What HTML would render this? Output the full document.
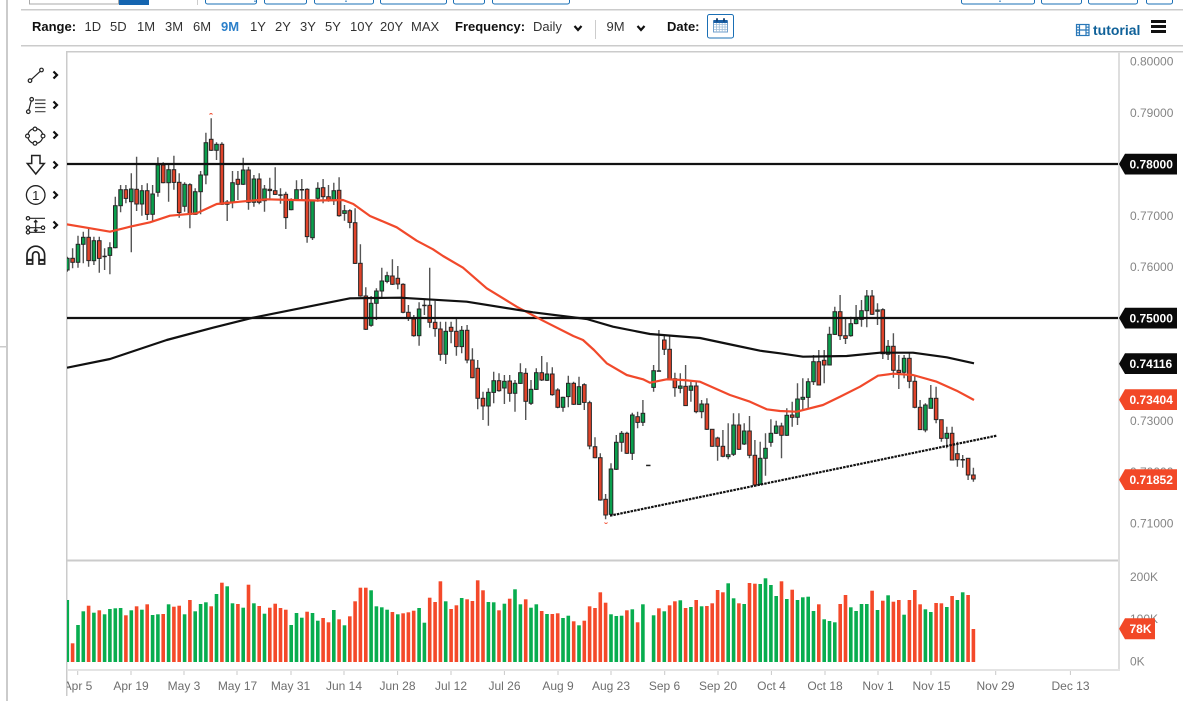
<!DOCTYPE html>
<html lang="en">
<head>
<meta charset="utf-8">
<title>Chart</title>
<style>
html,body{margin:0;padding:0;background:#fff;width:1183px;height:701px;overflow:hidden}
body{position:relative;font-family:"Liberation Sans",sans-serif;filter:blur(.3px)}
svg{position:absolute;left:0;top:0;display:block}
.t{position:absolute;top:18px;font-size:13px;line-height:18px;color:#333;white-space:nowrap;transform-origin:0 50%}
.b{font-weight:bold;color:#111}
</style>
</head>
<body>
<svg width="1183" height="701" viewBox="0 0 1183 701" xmlns="http://www.w3.org/2000/svg">
<defs><clipPath id="c1"><rect x="67" y="52" width="1051" height="507"/></clipPath>
<clipPath id="c2"><rect x="67" y="561" width="1051" height="108"/></clipPath>
<clipPath id="c3"><rect x="67" y="672" width="1116" height="29"/></clipPath></defs>

<!-- frame -->
<g fill="#cbcbcb">
<rect x="6" y="0" width="2" height="701"/>
<rect x="0" y="346" width="7" height="1.5"/>
<rect x="21" y="9" width="1162" height="1.5"/>
<rect x="21" y="45" width="1162" height="1.5"/>
<rect x="66" y="51" width="1117" height="1.5"/>
<rect x="66" y="51" width="1.5" height="645"/>
<rect x="67" y="559.5" width="1051" height="2"/>
</g>
<rect x="1118" y="52" width="2" height="618" fill="#dedede"/>
<rect x="67" y="669" width="1053" height="2" fill="#e4e4e4"/>
<g stroke="#c8c8c8" stroke-width="1">
<path d="M77.7 671V675M131 671V675M184 671V675M237 671V675M291 671V675M344 671V675M397.6 671V675M451 671V675M504.4 671V675M558 671V675M611 671V675M664.7 671V675M718 671V675M771.4 671V675M825 671V675M878 671V675M931 671V675M995.7 671V675M1070.4 671V675"/>
</g>

<!-- top clipped controls -->
<rect x="29.5" y="-2" width="89" height="6" fill="#fff" stroke="#aaa" stroke-width="1"/>
<rect x="119" y="0" width="30" height="5" fill="#1565b0"/>
<rect x="197" y="0" width="1" height="5" fill="#ccc"/>
<g fill="#fff" stroke="#1a6fb5" stroke-width="1">
<rect x="205.5" y="-6" width="51" height="10" rx="2"/>
<rect x="264.5" y="-6" width="42" height="10" rx="2"/>
<rect x="314.5" y="-6" width="59" height="10" rx="2"/>
<rect x="380.5" y="-6" width="66" height="10" rx="2"/>
<rect x="453.5" y="-6" width="31" height="10" rx="2"/>
<rect x="492.5" y="-6" width="77" height="10" rx="2"/>
<rect x="961.5" y="-6" width="73" height="10" rx="2"/>
<rect x="1041.5" y="-6" width="40" height="10" rx="2"/>
<rect x="1088.5" y="-6" width="49" height="10" rx="2"/>
<rect x="1146.5" y="-6" width="26" height="10" rx="2"/>
</g>
<path d="M255 0.5V2M346 0.5V2M1000 0.5V2" stroke="#1a6fb5" stroke-width="1.2"/>

<!-- toolbar icons -->
<rect x="595" y="20" width="1" height="19" fill="#ccc"/>
<path d="M574.5 26L578 30L581.5 26M637.5 26L641 30L644.5 26" fill="none" stroke="#111" stroke-width="2.2"/>
<rect x="707.5" y="14.5" width="26" height="23.5" rx="2" fill="#fff" stroke="#1a6fb5"/>
<g>
<rect x="713.5" y="21" width="14" height="11" fill="#fff" stroke="#6f9fcc" stroke-width="1"/>
<path d="M716.5 22V32M719.3 22V32M722.2 22V32M725 22V32M714 24.5H727M714 27H727M714 29.5H727" stroke="#9dbcd9" stroke-width=".8"/>
<rect x="713.5" y="20" width="14" height="3" fill="#1a5fa5"/>
<path d="M717 18.3V21.5M724 18.3V21.5" stroke="#123f70" stroke-width="1.8"/>
</g>
<g fill="none" stroke="#2a78b8" stroke-width="1.2">
<rect x="1076.5" y="24.5" width="12.5" height="11"/>
<path d="M1079.5 24.5V35.5M1086 24.5V35.5M1079.5 30H1086M1076.5 27.2H1079.5M1076.5 30H1079.5M1076.5 32.8H1079.5M1086 27.2H1089M1086 30H1089M1086 32.8H1089"/>
</g>
<rect x="1151" y="20" width="15" height="3" fill="#111"/>
<rect x="1151" y="25" width="15" height="3" fill="#111"/>
<rect x="1151" y="30" width="15" height="3" fill="#111"/>

<!-- drawing tools -->
<g fill="none" stroke="#222" stroke-width="1.2">
<circle cx="30" cy="80.7" r="1.8"/><circle cx="41.5" cy="70" r="1.8"/><path d="M31.4 79.4L40.2 71.3"/>
<circle cx="28.3" cy="111.7" r="1.8"/><circle cx="31.7" cy="99.3" r="1.8"/><path d="M28.8 110L31.2 101"/>
<path d="M35 100H45.5M35 103.5H45.5M35 107.5H45.5M35 111.7H45.5" stroke="#444" stroke-width="1.2"/>
<circle cx="35.3" cy="136" r="7.5"/>
<g fill="#fff"><circle cx="35" cy="129" r="1.9"/><circle cx="27.5" cy="136" r="1.9"/><circle cx="43" cy="136" r="1.9"/><circle cx="35" cy="143.3" r="1.9"/></g>
<path d="M31.7 155.5H40V163.5H44.3L35.8 174L27.3 163.5H31.7Z" stroke-width="1.5"/>
<circle cx="35.7" cy="195" r="9.3" stroke-width="1.3"/>
<path d="M29.5 218.3H45M29.5 227.7H41.3M29.5 232.3H45"/>
<circle cx="28" cy="218.3" r="1.7"/><circle cx="28" cy="227.7" r="1.7"/><circle cx="28" cy="232.3" r="1.7"/><circle cx="43" cy="227.7" r="1.7"/>
<path d="M35.7 220.5V231.5M34 222.3L35.7 220.3L37.4 222.3M34 229.7L35.7 231.7L37.4 229.7"/>
<path d="M27 264V255A8.8 8.8 0 0 1 44.6 255V264H39V255A3.2 3.2 0 0 0 32.6 255V264Z" stroke-width="1.7"/>
<path d="M27 260H32.6M39 260H44.6" stroke-width="2.2"/>
</g>
<text x="35.7" y="200" font-size="13" text-anchor="middle" fill="#222" font-family="Liberation Sans, sans-serif">1</text>
<g fill="none" stroke="#111" stroke-width="2.2">
<path d="M53.5 71.5L57 75L53.5 78.5M53.5 101.5L57 105L53.5 108.5M53.5 131.5L57 135L53.5 138.5M53.5 161.5L57 165L53.5 168.5M53.5 191.5L57 195L53.5 198.5M53.5 221.5L57 225L53.5 228.5"/>
</g>

<!-- volume -->
<g id="vol" clip-path="url(#c2)"></g>

<!-- candles -->
<g id="cand" clip-path="url(#c1)"></g>

<g clip-path="url(#c1)">
<path d="M67 164H1118M67 318H1118" stroke="#111" stroke-width="2.2" fill="none"/>
<polyline fill="none" stroke="#f1492b" stroke-width="2.2" stroke-linejoin="round" points="66.7,224.3 86.7,227.7 110,231.7 130,226.7 150,222.3 170,215.7 196.7,213.3 216.7,204 240,201.7 266.7,199.3 293,200 316.7,200.5 343,200 353.3,204 370,216 396.7,227.3 416.7,240.7 433,249.3 443,256 463,267.7 486.7,288.3 516.7,306.7 543,320.7 573.3,336 583,340 594,350 606.7,363.3 626.7,375 643,379.3 650,382.7 666.7,379.3 683,380 700,381.7 730,395 750,401.7 766.7,409.3 780,411 796.7,411.7 823,405 840,396.7 860,386.7 878,375.7 893,373.7 913,375 936.7,381.7 956.7,390.7 974,400"/>
<polyline fill="none" stroke="#111" stroke-width="2.2" stroke-linejoin="round" points="67,367.7 110,359 166.7,340 213,327.7 253,317.7 300,308.3 350,298.3 400,297.7 466.7,301.7 533,312.3 586.7,319 613,326.7 650,334 700,338 733,345 760,350.7 780,353.3 803,356.7 846.7,356 880,352.7 913,352.7 946.7,357.3 974,363.3"/>
<path d="M610 515.7L996.5 435.7" stroke="#111" stroke-width="2.2" stroke-dasharray="2.5 1" fill="none"/>
<path d="M209.5 114.5Q211 112.5 212.5 114.5M604.5 522.5Q606 524.5 607.5 522.5" stroke="#f1492b" stroke-width="1" fill="none"/>
</g>

<!-- price axis -->
<g font-family="Liberation Sans, sans-serif" font-size="12" fill="#858585">
<text x="1130" y="65.5">0.80000</text>
<text x="1130" y="117">0.79000</text>
<text x="1130" y="220">0.77000</text>
<text x="1130" y="271">0.76000</text>
<text x="1130" y="425">0.73000</text>
<text x="1130" y="476">0.70000</text>
<text x="1130" y="527.5">0.71000</text>
<text x="1130" y="581">200K</text>
<text x="1130" y="623">100K</text>
<text x="1130" y="665.5">0K</text>
</g>
<g font-family="Liberation Sans, sans-serif" font-size="12" font-weight="bold" fill="#fff">
<path d="M1119 164L1125 153.7H1177V174.5H1125Z" fill="#0a0a0a"/><text x="1129.5" y="168.3">0.78000</text>
<path d="M1119 318L1125 307.7H1177V328.5H1125Z" fill="#0a0a0a"/><text x="1129.5" y="322.3">0.75000</text>
<path d="M1119 363.7L1125 353.3H1177V374H1125Z" fill="#0a0a0a"/><text x="1129.5" y="368">0.74116</text>
<path d="M1119 399.7L1125 389.3H1177V410H1125Z" fill="#f24827"/><text x="1129.5" y="404">0.73404</text>
<path d="M1119 479.7L1125 469.3H1177V490H1125Z" fill="#f24827"/><text x="1129.5" y="484">0.71852</text>
<path d="M1119 628.7L1125 618.3H1155V639.3H1125Z" fill="#f24827"/><text x="1129.5" y="633">78K</text>
</g>

<!-- date axis -->
<g clip-path="url(#c3)" font-family="Liberation Sans, sans-serif" font-size="12" fill="#6e6e6e" text-anchor="middle">
<text x="78" y="690">Apr 5</text><text x="131" y="690">Apr 19</text><text x="184" y="690">May 3</text><text x="237.5" y="690">May 17</text><text x="290.5" y="690">May 31</text><text x="344" y="690">Jun 14</text><text x="397.5" y="690">Jun 28</text><text x="451" y="690">Jul 12</text><text x="504.5" y="690">Jul 26</text><text x="558" y="690">Aug 9</text><text x="611" y="690">Aug 23</text><text x="664.5" y="690">Sep 6</text><text x="718" y="690">Sep 20</text><text x="771.5" y="690">Oct 4</text><text x="825" y="690">Oct 18</text><text x="878" y="690">Nov 1</text><text x="931.5" y="690">Nov 15</text><text x="995.5" y="690">Nov 29</text><text x="1070.5" y="690">Dec 13</text>
</g>
</svg>

<!-- toolbar text -->
<div class="t b" style="left:32px">Range:</div>
<div class="t" style="left:84.5px">1D</div>
<div class="t" style="left:110px">5D</div>
<div class="t" style="left:137px">1M</div>
<div class="t" style="left:165px">3M</div>
<div class="t" style="left:193px">6M</div>
<div class="t b" style="left:221px;color:#2b7fc9">9M</div>
<div class="t" style="left:250px">1Y</div>
<div class="t" style="left:275px">2Y</div>
<div class="t" style="left:300px">3Y</div>
<div class="t" style="left:325px">5Y</div>
<div class="t" style="left:350px">10Y</div>
<div class="t" style="left:380px">20Y</div>
<div class="t" style="left:411px">MAX</div>
<div class="t b" style="left:455px">Frequency:</div>
<div class="t" style="left:533px">Daily</div>
<div class="t" style="left:606.5px">9M</div>
<div class="t b" style="left:667px">Date:</div>
<div class="t" style="left:1093px;top:21px;font-size:14px;font-weight:bold;color:#0f6199">tutorial</div>

<script>
(function(){
var S=[
[105,3,"g460,495,455,500 r460,472,430,490 g418,472,392,488 g397,418,380,475 r397,467,370,485 g407,467,395,480 r407,460,395,503 f452,454,430,495 g428,451,412,508 g302,428,275,430 g254,302,240,322 r254,280,240,295 g252,290,205,442 r253,297,155,318 g257,297,240,332 r257,328,235,345 g267,328,240,350 g180,262,157,275 r180,233,172,235 g194,233,180,290 r194,232,152,254 r232,323,205,338 g238,304,232,320 r239,328,235,370 g260,328,250,330 g210,260,198,328 g113,210,83,238 r103,136,40,138 g118,136,112,165 r118,298,112,300 g291,298,285,348 g233,292,198,310 r223,238,198,285 g195,238,158,240 r195,292,185,314 g222,292,210,305 r222,292,205,298 g252,287,240,320 r253,257,218,282 r257,268,187,270 f268,270,250,296 r268,338,260,372 g284,314,280,316 g254,284,226,285 f252,254,222,285 r253,395,250,413 g287,398,284,405 g250,280,232,290"],
[0,1,"r187.7,196.7,179,203.3 r196.7,200.7,185,201.7 g190.7,200.7,182.7,205 r190.3,215.7,177.3,216.7"],
[190,3,"g62,70,45,92 r62,97,58,115 r98,220,55,222 r220,318,163,320 r318,418,292,420 g340,406,318,410 g303,340,295,390 g273,303,233,325 g257,274,245,280 r258,283,208,285 r265,282,228,298 r283,367,280,370 r367,385,345,393 r387,437,375,440 g357,437,337,467 f344,346,330,375 r346,397,233,413 r397,416,333,440 r417,493,395,512 g424,493,395,522 r412,424,395,460 r424,470,385,497 g421,470,408,490 r421,510,405,520 r510,563,475,565 r535,625,510,658 r625,648,605,690 g607,648,595,707 g572,607,545,640 r572,602,550,605 g574,594,555,642 r573,610,555,635 g580,610,570,665 g548,580,520,582 r550,634,535,690 g598,640,570,645 g548,598,535,600 r548,570,498,573 g552,571,517,573 r552,614,532,617 r600,652,595,655 g622,652,620,665 g580,620,557,652 r580,643,575,645 g590,643,560,645 r584,637,580,660 r638,768,632,778 r770,803,742,805"],
[330,3,"r383,510,370,512 r508,555,492,568 g417,553,400,555 g337,418,315,420 g310,337,303,365 r310,370,305,372 g255,370,248,390 r260,277,245,295 g250,277,210,288 f404,406,405,405 g122,172,105,185 f121,124,0,124 r30,58,18,75 r58,147,15,150 r146,173,128,200 g168,175,130,190 r169,227,105,228 g168,181,155,215 r168,245,155,250 g222,245,210,265 r222,298,205,300 r298,349,298,350 r324,349,320,392 r349,379,300,382 g374,380,280,388 g285,373,250,378 r285,358,250,360 g303,342,280,345 r303,376,258,385 r376,465,330,467 g385,463,335,465 g355,385,310,437 g310,337,268,350 g288,310,272,312 r288,316,278,385 g256,316,235,318 r255,262,215,290 g207,262,160,285 g202,208,145,240"],
[285,3,"g290,337,280,370 g230,290,210,300 r230,300,195,300 r226,240,195,295 g148,240,125,240 g80,148,65,150 r80,152,30,165 r152,160,100,177 g116,152,95,155 g103,116,60,118 g77,103,45,125 g33,77,15,127 r33,88,15,90 g75,79,55,120 r74,206,70,222 g184,208,165,225 r184,256,145,278 r256,263,210,312 g220,262,210,280 r220,289,205,310 r289,367,270,370 r367,434,345,435 g360,435,355,442 g340,370,300,370 r340,404,305,415 r404,460,404,470 g445,460,425,490 r445,525,425,526 r506,524,470,545 f522,524,510,548 r520,570,520,585 r570,582,548,590"]
];
var GR={g:"#0a9f4d",r:"#e0432a",f:"#222"},w="",b="",i=0;
S.forEach(function(s){
  s[2].split(" ").forEach(function(c){
    var t=c[0],v=c.slice(1).split(",").map(function(n){return s[0]+(+n)/s[1]});
    var x=67.3+5.33*i;
    if(v[3]-v[2]>0.5) w+="M"+x.toFixed(1)+" "+v[2].toFixed(1)+"V"+v[3].toFixed(1);
    if(t==="f") b+='<rect x="'+(x-2.2).toFixed(1)+'" y="'+v[0].toFixed(1)+'" width="4.4" height="1.5" fill="#222"/>';
    else b+='<rect x="'+(x-1.8).toFixed(1)+'" y="'+v[0].toFixed(1)+'" width="3.6" height="'+(v[1]-v[0]).toFixed(1)+'" fill="'+GR[t]+'" stroke="#262626" stroke-width="1"/>';
    i++;
  });
});
document.getElementById("cand").innerHTML='<path d="'+w+'" stroke="#555" stroke-width="1.4" fill="none"/>'+b;

var V="g150 r280 g225 g184 r167 g188 r181 g193 g177 g175 g174 r196 g181 r169 g179 r163 g195 g193 r192 g163 r170 r167 g193 r150 g184 g162 g157 r169 g132 r98 g109 g160 r162 g173 r104 g160 r168 g191 r173 r161 r174 r179 g225 g189 g203 r185 g189 g212 r204 r217 g180 r208 g226 r199 r154 r113 r113 g121 g169 g172 g179 r186 g193 r190 r187 r182 g174 g218 r143 r156 r94 g154 r177 r166 g144 r148 r153 r91 r121 g156 g157 r181 g161 r146 g118 g163 r148 g173 g163 r183 g192 r192 r190 g204 g197 r214 g226 r212 r169 r174 r127 r158 g193 g198 g197 r181 g178 r217 g163 x0 g196 r175 g184 r166 r154 g151 r174 g171 r150 g169 r168 r160 r120 r127 g100 g145 r160 g162 r99 r101 g102 g85 g105 g138 r94 g147 r119 g150 g142 g140 g183 r163 g208 g213 g217 r162 r135 g172 g183 g162 g162 r122 g180 r152 g136 r155 r150 g194 r150 r120 r163 g178 g186 r159 r160 g171 r138 g150 g127 r135 r237".split(" ");
var h="";
V.forEach(function(c,k){
  if(c[0]==="x")return;
  var y=550+(+c.slice(1))/3,x=67.3+5.33*k;
  h+='<rect x="'+(x-1.8).toFixed(1)+'" y="'+y.toFixed(1)+'" width="3.6" height="'+(662-y).toFixed(1)+'" fill="'+(c[0]==="g"?"#08ad4f":"#f4492a")+'"/>';
});
document.getElementById("vol").innerHTML=h;
})();
</script>
</body>
</html>
